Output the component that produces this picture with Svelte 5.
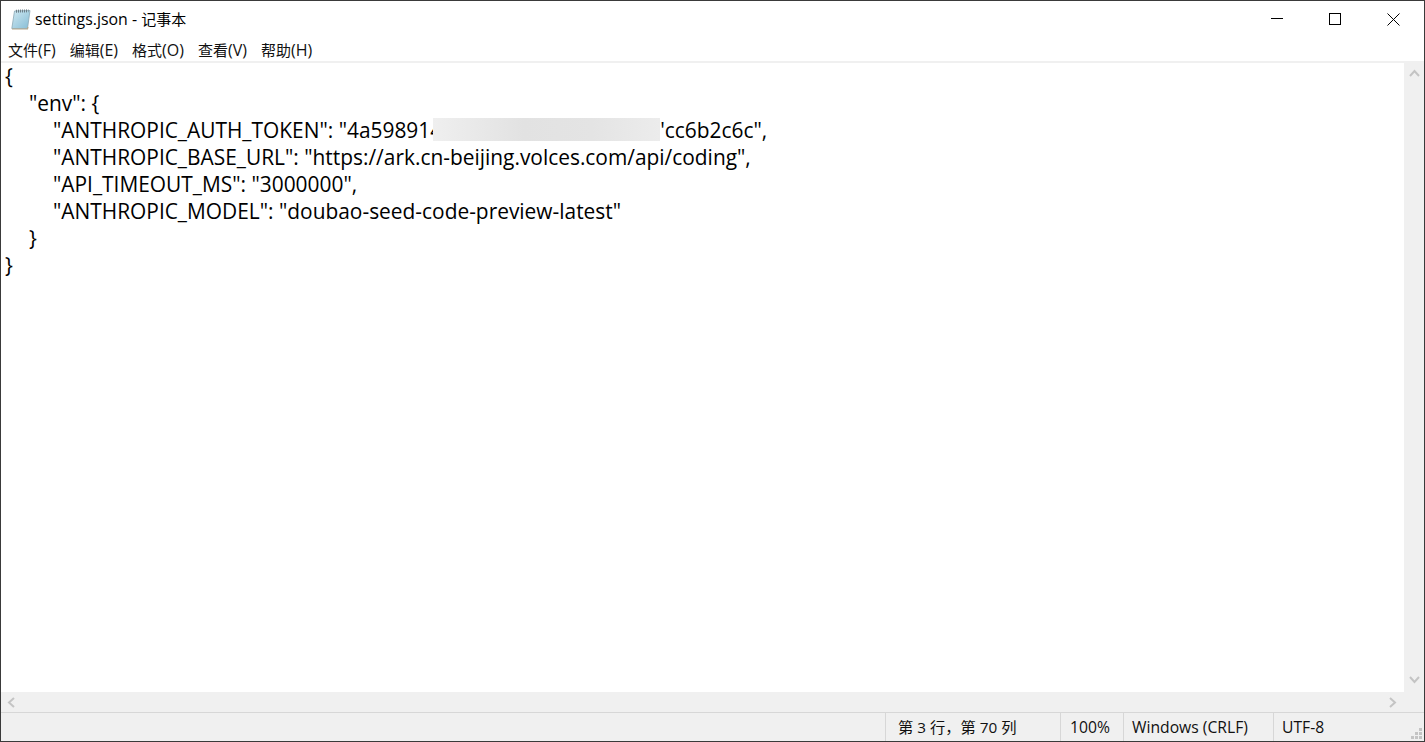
<script lang="ts">
	const menus = [
		{ label: '文件', key: '(F)' },
		{ label: '编辑', key: '(E)' },
		{ label: '格式', key: '(O)' },
		{ label: '查看', key: '(V)' },
		{ label: '帮助', key: '(H)' }
	];
	const lines = [
		{ indent: 0, text: '{' },
		{ indent: 1, text: '"env": {' },
		{ indent: 2, text: '"ANTHROPIC_AUTH_TOKEN": "4a598914', tail: '\'cc6b2c6c",' },
		{ indent: 2, text: '"ANTHROPIC_BASE_URL": "https://ark.cn-beijing.volces.com/api/coding",' },
		{ indent: 2, text: '"API_TIMEOUT_MS": "3000000",' },
		{ indent: 2, text: '"ANTHROPIC_MODEL": "doubao-seed-code-preview-latest"' },
		{ indent: 1, text: '}' },
		{ indent: 0, text: '}' }
	];
</script>

<div class="window">
	<header class="titlebar">
		<svg class="app-icon" width="20" height="21" viewBox="0 0 20 21">
			<defs>
				<linearGradient id="page" x1="0" y1="0" x2="1" y2="1">
					<stop offset="0" stop-color="#cfe8f1"/>
					<stop offset="1" stop-color="#86bdd6"/>
				</linearGradient>
			</defs>
			<path d="M3.5 2 L19 1.5 L16.5 19.5 L0.8 19.5 Z" fill="url(#page)" stroke="#8aa7b5" stroke-width="0.8"/>
			<path d="M5 2.2 L17.5 1.8" stroke="#6d7f88" stroke-width="3" stroke-dasharray="1 1"/>
			<path d="M1 20 H16.5 L17 18" stroke="#b5a78c" stroke-width="1.2" fill="none"/>
		</svg>
		<span class="title">settings.json - <span class="cjk">记事本</span></span>
		<div class="controls">
			<div class="control">
				<svg width="12" height="12" viewBox="0 0 12 12"><path d="M0 5.5 H12" stroke="#000" stroke-width="1"/></svg>
			</div>
			<div class="control">
				<svg width="12" height="12" viewBox="0 0 12 12"><rect x="0.5" y="0.5" width="11" height="11" fill="none" stroke="#000" stroke-width="1"/></svg>
			</div>
			<div class="control">
				<svg width="13" height="13" viewBox="0 0 13 13"><path d="M0.5 0.5 L12.5 12.5 M12.5 0.5 L0.5 12.5" stroke="#000" stroke-width="1"/></svg>
			</div>
		</div>
	</header>

	<nav class="menubar">
		{#each menus as item}
			<span class="menu-item">{item.label}<span class="key">{item.key}</span></span>
		{/each}
	</nav>

	<div class="edit-area">
		<div class="text-row">
			<div class="editor">
				{#each lines as line}
					<div class="line indent-{line.indent}">{line.text}{#if line.tail}<span class="blur"></span>{line.tail}{/if}</div>
				{/each}
			</div>
			<div class="vscroll">
				<svg width="11" height="8" viewBox="0 0 11 8"><path d="M1 7 L5.5 2 L10 7" fill="none" stroke="#c4c4c4" stroke-width="2"/></svg>
				<svg width="11" height="8" viewBox="0 0 11 8"><path d="M1 1 L5.5 6 L10 1" fill="none" stroke="#c4c4c4" stroke-width="2"/></svg>
			</div>
		</div>
		<div class="hscroll">
			<svg width="8" height="11" viewBox="0 0 8 11"><path d="M7 1 L2 5.5 L7 10" fill="none" stroke="#c4c4c4" stroke-width="2"/></svg>
			<svg width="8" height="11" viewBox="0 0 8 11"><path d="M1 1 L6 5.5 L1 10" fill="none" stroke="#c4c4c4" stroke-width="2"/></svg>
		</div>
	</div>

	<footer class="statusbar">
		<div class="cell pos">第 3 行，第 70 列</div>
		<div class="cell zoom">100%</div>
		<div class="cell eol">Windows (CRLF)</div>
		<div class="cell enc">UTF-8</div>
		<svg class="grip" width="12" height="12" viewBox="0 0 12 12">
			<path d="M8 0h3v3H8z M4 4h3v3H4z M8 4h3v3H8z M0 8h3v3H0z M4 8h3v3H4z M8 8h3v3H8z" fill="#c4c4c4"/>
		</svg>
	</footer>
</div>

<style>
	:global(body) {
		margin: 0;
		background: #fff;
	}

	.window {
		width: 1425px;
		height: 742px;
		box-sizing: border-box;
		display: flex;
		flex-direction: column;
		border: 1px solid #3a3a3a;
		background: #fff;
		color: #000;
		font-family: "Open Sans", "Noto Sans CJK SC", sans-serif;
		overflow: hidden;
	}

	.titlebar {
		height: 36px;
		flex: none;
		display: flex;
		align-items: center;
		padding-left: 10px;
		box-sizing: border-box;
	}

	.app-icon {
		margin-right: 4px;
	}

	.title {
		font-size: 15.9px;
	}

	.title .cjk {
		font-size: 15px;
	}

	.controls {
		margin-left: auto;
		display: flex;
		padding-right: 1px;
	}

	.control {
		width: 58.5px;
		height: 36px;
		display: flex;
		align-items: center;
		justify-content: center;
	}

	.menubar {
		height: 23px;
		flex: none;
		display: flex;
		gap: 14px;
		padding: 1px 0 0 7px;
		align-items: center;
		font-size: 15px;
		color: #111;
		border-bottom: 2px solid #f0f0f0;
	}

	.key {
		font-size: 16px;
	}

	.edit-area {
		flex: 1;
		min-height: 0;
		display: flex;
		flex-direction: column;
	}

	.text-row {
		flex: 1;
		min-height: 0;
		display: flex;
	}

	.editor {
		flex: 1;
		padding-left: 4px;
		font-size: 20.9px;
		line-height: 27px;
	}

	.line {
		white-space: pre;
		height: 27px;
	}

	.indent-1 {
		padding-left: 24px;
	}

	.indent-2 {
		padding-left: 48px;
	}

	.blur {
		display: inline-block;
		width: 227px;
		height: 23px;
		margin-left: -9px;
		vertical-align: -3px;
		background: linear-gradient(90deg, #efefef, #e2e2e2 40%, #e4e4e4 70%, #ececec);
	}

	.vscroll {
		width: 20px;
		flex: none;
		background: #f0f0f0;
		display: flex;
		flex-direction: column;
		justify-content: space-between;
		align-items: center;
		padding: 6px 0 8px;
		box-sizing: border-box;
	}

	.hscroll {
		height: 20px;
		flex: none;
		background: #f0f0f0;
		display: flex;
		justify-content: space-between;
		align-items: center;
		padding: 0 27px 0 6px;
	}

	.statusbar {
		height: 29px;
		flex: none;
		position: relative;
		display: flex;
		justify-content: flex-end;
		background: #f0f0f0;
		border-top: 1px solid #d7d7d7;
		box-sizing: border-box;
		font-size: 15.7px;
		color: #111;
	}

	.cell {
		box-sizing: border-box;
		border-left: 1px solid #d7d7d7;
		padding-left: 12px;
		line-height: 28px;
		white-space: nowrap;
	}

	.pos { width: 175px; font-size: 15.3px; }
	.zoom { width: 63px; padding-left: 9px; }
	.eol { width: 150px; padding-left: 8px; }
	.enc { width: 151px; padding-left: 8px; }

	.grip {
		position: absolute;
		right: 1px;
		bottom: 1px;
	}
</style>
